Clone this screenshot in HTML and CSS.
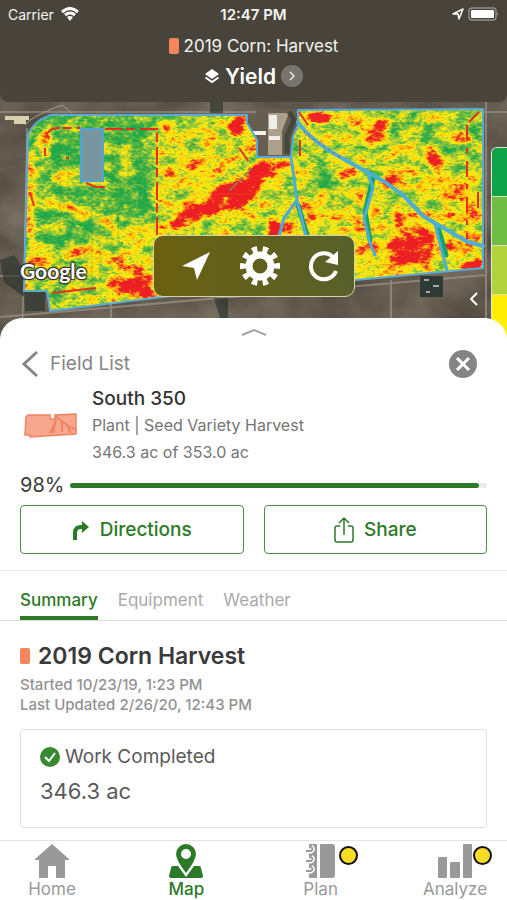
FILE: index.html
```html
<!DOCTYPE html>
<html lang="en">
<head>
  <meta charset="UTF-8">
  <meta name="viewport" content="width=device-width, initial-scale=1">
  <title>South 350 - Field Map</title>
  <link rel="stylesheet" href="styles.css">
</head>
<body>
  <!-- Map -->
  <section class="map">
    <svg class="map-picture" viewBox="0 0 507 342" preserveAspectRatio="xMidYMin slice" aria-hidden="true">
      <defs>
        <!-- grey level in, yield colour out: black is low (red), white is high (green) -->
        <filter id="yield" filterUnits="userSpaceOnUse" x="0" y="90" width="507" height="240" color-interpolation-filters="sRGB">
          <feGaussianBlur in="SourceGraphic" stdDeviation="3" result="base"/>
          <feTurbulence type="fractalNoise" baseFrequency="0.06 0.09" numOctaves="4" seed="7"/>
          <feColorMatrix values="1 0 0 0 0  1 0 0 0 0  1 0 0 0 0  0 0 0 0 1" result="patches"/>
          <feTurbulence type="fractalNoise" baseFrequency="0.25 0.45" numOctaves="2" seed="12"/>
          <feColorMatrix values="0 1 0 0 0  0 1 0 0 0  0 1 0 0 0  0 0 0 0 1" result="grain"/>
          <feComposite in="base" in2="patches" operator="arithmetic" k2="1" k3="1.1" k4="-0.56" result="mixed"/>
          <feComposite in="mixed" in2="grain" operator="arithmetic" k2="1" k3="0.55" k4="-0.28"/>
          <feComponentTransfer>
            <feFuncR type="table" tableValues="0.93 0.93 0.97 1 0.99 0.74 0.47 0.25 0.12"/>
            <feFuncG type="table" tableValues="0.12 0.14 0.52 0.83 0.93 0.83 0.75 0.69 0.66"/>
            <feFuncB type="table" tableValues="0.14 0.13 0.10 0.05 0.06 0.18 0.25 0.27 0.29"/>
          </feComponentTransfer>
        </filter>
        <filter id="soil" x="0" y="0" width="100%" height="100%" color-interpolation-filters="sRGB">
          <feTurbulence type="fractalNoise" baseFrequency="0.02 0.03" numOctaves="3" seed="3"/>
          <feColorMatrix values="0.22 0 0 0 0.28  0.21 0 0 0 0.25  0.20 0 0 0 0.21  0 0 0 0 1"/>
        </filter>
        <clipPath id="field">
          <path d="M28 135Q31 127 40 120L51 115H247V123L257 140V157H291L293 137 298 125V110L483 109V268L356 280 170 296 50 311 47 291H24L25 250Z"/>
        </clipPath>
      </defs>

      <!-- ground, roads and farm yards -->
      <rect width="507" height="342" filter="url(#soil)"/>
      <g fill="none" stroke="#a5a08f">
        <path d="M0 112H507" stroke-width="1"/>
        <path d="M27 128L24 270 22 342M25 125Q30 117 62 105L72 113"/>
        <path d="M486 100V342M0 317L486 275M0 276H24M111 303V342M391 280V342" stroke-width="2" opacity=".6"/>
      </g>
      <path d="M5 118h24M14 122h12" stroke="#d9d2ae" stroke-width="4"/>
      <path d="M210 102h13v11h-13ZM0 260l14-5 10 14v28l-20-15ZM24 291h21v20H25ZM214 298h14v20h-8Z" fill="#25312a" opacity=".6"/>
      <path d="M256 109h40v48h-40Z" fill="#675e50"/>
      <path d="M268 113h21l-7 18v24h-14Z" fill="#aba18a"/>
      <path d="M269 115h8v14h-8ZM253 131h13v4h-13ZM269 136h11v4h-11Z" fill="#f0efea"/>
      <path d="M289 112l5 8-7 16v18" fill="none" stroke="#3c4236" stroke-width="5" opacity=".8"/>
      <path d="M420 276h23v21h-23Z" fill="#2d3a35"/>
      <path d="M424 280h5M433 286h6M426 292h4" stroke="#a9aaa0" stroke-width="2"/>

      <!-- yield heat map -->
      <g clip-path="url(#field)">
        <g filter="url(#yield)">
          <rect y="80" width="507" height="260" fill="#a0a0a0"/>
          <path d="M20 110H157V235L100 240 40 260H20Z" fill="#c8c8c8"/>
          <path d="M104 120h40v110h-40ZM68 125h14v110h-14Z" fill="#dadada"/>
          <path d="M157 115H250L300 170V240H157Z" fill="#909090"/>
          <path d="M300 110H420L370 180 300 150Z" fill="#a0a0a0"/>
          <path d="M410 108h72v62h-50Z" fill="#c0c0c0"/>
          <path d="M300 170l100 30 80 50v35l-190 5Z" fill="#868686"/>
          <path d="M20 112h90l80 2v8H40Z" fill="#d8d8d8"/>
          <path d="M305 170l40 5 10 30-45 5ZM462 120h20v80h-20Z" fill="#b8b8b8"/>
          <g fill="none" stroke="#585858" stroke-width="9" stroke-linecap="round">
            <path d="M48 130q-6 12-2 22M30 155v75l5 30M60 175h16M50 200l50 18 18 16M35 262l40-10 32 5M125 150v14M160 120l10 14M185 155l-20 30M120 262l15-35 15 10"/>
            <path d="M185 165h35M240 120l8 30M345 118l22 12 10 28M405 150h22M375 185h50M440 190l10 25M310 245h60M325 195l-18 15M450 245h30M435 120l30 18"/>
          </g>
          <path d="M103 260l25-8 25 20v20l-45 8ZM190 180h65v30h-40ZM360 120h24v22h-24ZM432 175h45v65h-18Z" fill="#606060"/>
          <!-- low yield spots -->
          <g fill="#000">
            <path d="M168 228q8-20 34-24 13-5 15-16l32-12 8-15h28l2 8-22 7q-2 18-16 24l-20 12-35 8-16 9Z"/>
            <path d="M112 298l8-12 20-5-8-20 20 15v20ZM228 122l10-4 5 16-13 4Z"/>
            <path d="M308 114h22v9h-22ZM376 118h13l-4 16-8-4ZM420 148h16l6 32-8-10ZM387 238l27-3 8 24-32 10ZM414 225l20 8-3 32-12-6ZM461 262h22v12h-22ZM445 236l20 8-15 8ZM394 210l12 14-10 8ZM357 212l8 40h-6ZM315 220l8 8M340 168h16v8h-16ZM388 174h12v8h-12Z"/>
            <path d="M270 222h10v15h-10ZM285 220h10v15h-10Z"/>
          </g>
        </g>
        <!-- tractor lines -->
        <path d="M60 125V245M68 125V280M92 185V285M100 125V280M112 130V270M118 130V270M128 130V225M140 130V210" stroke="#3d8f35" opacity=".3"/>
        <path d="M160 133H247M160 145H290M160 158H290M160 176H290M160 194H290M300 190H480M300 205H480M340 219H480M330 250H480" stroke="#e77e1d" opacity=".22"/>
        <!-- headland passes -->
        <g fill="none" stroke="#e8301f" stroke-width="2">
          <path d="M46 137q2-9 12-9h22M105 129H157V250" stroke-dasharray="18 3 9 5"/>
          <path d="M86 183l10 4h9M30 192l4 14M45 148v8M66 158h3M52 293l44-5"/>
          <path d="M467 125V245M478 192v16M469 122l10-10M299 112l9 13M239 148l10 14M300 140v22" stroke-dasharray="16 7 5 8"/>
        </g>
        <path d="M311 115h18v7h-18Z" fill="#ee2524"/>
      </g>

      <!-- grass waterways -->
      <g fill="none" stroke-linecap="round" stroke-linejoin="round">
        <path d="M373 178L365 212 370 240M438 227L446 255M298 205L307 235" stroke="#17a16b" stroke-width="5"/>
        <g stroke="#4cadd6" stroke-width="3">
          <path d="M298 122Q310 140 340 157L385 182 403 195 423 216 440 226 468 242 483 246" stroke-width="4"/>
          <path d="M369 177L373 188 364 218 370 243 375 255M435 224L441 248 447 270M291 157L297 200 307 240M297 200L284 218 278 240"/>
        </g>
        <path d="M304 132L341 158" stroke="#c23a50" stroke-dasharray="1 5"/>
        <path d="M230 190L251 169" stroke="#738467" stroke-width="2" stroke-dasharray="3 4"/>
      </g>

      <!-- boundary -->
      <path d="M28 135Q31 127 40 120L51 115H247V123L257 140V157H291L293 137 298 125V110L483 109V268L356 280 170 296 50 311 47 291H24L25 250Z" fill="none" stroke="#5aabd9" stroke-width="2" stroke-linejoin="round"/>
      <path d="M81 129h22v52H81Z" fill="#7895a0" stroke="#4fa5d4" stroke-width="2"/>
    </svg>

    <header class="map-header">
      <div class="status-bar">
        <span class="carrier">Carrier
          <svg width="20" height="16" viewBox="0 0 20 16" fill="none" stroke="#fff" stroke-width="3" aria-hidden="true">
            <path d="M2 6Q10-1 18 6M5 9Q10 5 15 9"/>
            <path d="M7 11Q10 9 13 11L10 15Z" fill="#fff" stroke="none"/>
          </svg>
        </span>
        <time>12:47 PM</time>
        <span class="status-icons">
          <svg width="12" height="12" viewBox="0 0 12 12" fill="none" stroke="#fff" stroke-width="1.5" stroke-linejoin="round" aria-hidden="true">
            <path d="M1 6L11 1 7 11 6 6Z"/>
          </svg>
          <svg width="31" height="14" viewBox="0 0 31 14" aria-hidden="true">
            <rect x="1" y="1" width="27" height="12" rx="3" fill="none" stroke="#8f8e89" stroke-width="1.5"/>
            <rect x="3" y="3" width="23" height="8" rx="1" fill="#fff"/>
            <path d="M29 5q2 2 0 4Z" fill="#8f8e89"/>
          </svg>
        </span>
      </div>
      <p class="season"><span class="swatch"></span>2019 Corn: Harvest</p>
      <button class="layer-button" type="button">
        <svg width="16" height="16" viewBox="0 0 16 16" aria-hidden="true">
          <path d="M8 1L15 6 8 11 1 6Z" fill="#fff"/>
          <path d="M1.500 9.500L8 14 14.500 9.500" fill="none" stroke="#fff" stroke-width="2"/>
        </svg>
        Yield
        <svg width="22" height="22" viewBox="0 0 22 22" aria-hidden="true">
          <circle cx="11" cy="11" r="11" fill="#76746d"/>
          <path d="M9 7L13 11 9 15" fill="none" stroke="#e8e8e5" stroke-width="1.500"/>
        </svg>
      </button>
    </header>

    <span class="google">Google</span>

    <div class="map-tools">
      <button type="button" aria-label="My location">
        <svg width="40" height="40" viewBox="0 0 40 40"><path d="M6 20L34 6 21 34 18 22Z" fill="#fff"/></svg>
      </button>
      <button type="button" aria-label="Map settings">
        <svg width="40" height="40" viewBox="0 0 40 40" fill="none" stroke="#fff">
          <circle cx="20" cy="20" r="11" stroke-width="7"/>
          <circle cx="20" cy="20" r="17" stroke-width="6" pathLength="100" stroke-dasharray="5 5" stroke-dashoffset="-2.500" transform="rotate(-18 20 20)"/>
        </svg>
      </button>
      <button type="button" aria-label="Refresh">
        <svg width="40" height="40" viewBox="0 0 40 40">
          <path d="M29 11A13 13 0 1 0 32 25" fill="none" stroke="#fff" stroke-width="4"/>
          <path d="M34 5V19L21 16Z" fill="#fff"/>
        </svg>
      </button>
    </div>

    <button class="legend-toggle" type="button" aria-label="Show legend">
      <svg width="10" height="16" viewBox="0 0 10 16" fill="none" stroke="#fff" stroke-width="2"><path d="M8 2L2 8 8 14"/></svg>
    </button>
    <div class="legend">
      <span class="legend-high"></span>
      <span class="legend-good"></span>
      <span class="legend-fair"></span>
      <span class="legend-low"></span>
    </div>
  </section>

  <!-- Field details -->
  <main class="sheet">
    <button class="handle" type="button" aria-label="Expand">
      <svg width="26" height="8" viewBox="0 0 26 8" fill="none" stroke="#a3a3a3" stroke-width="2"><path d="M1 7L13 2 25 7"/></svg>
    </button>

    <div class="sheet-bar">
      <a class="back" href="#fields">
        <svg width="18" height="28" viewBox="0 0 18 28" fill="none" stroke="#858585" stroke-width="3"><path d="M17 2L4 14 17 26"/></svg>
        Field List
      </a>
      <button class="close" type="button" aria-label="Close">
        <svg width="28" height="28" viewBox="0 0 28 28">
          <circle cx="14" cy="14" r="14" fill="#858585"/>
          <path d="M8 8L20 20M20 8L8 20" stroke="#fff" stroke-width="3"/>
        </svg>
      </button>
    </div>

    <div class="field-info">
      <svg class="field-shape" width="54" height="26" viewBox="0 0 54 26" stroke="#ef8461" aria-hidden="true">
        <path d="M2 4Q3 2 5 2H26V6H31V2L52 1V21L6 24V22H1Z" fill="#f8a78f" stroke-width="1.500"/>
        <path d="M31 3L43 12 52 17M32 6L29 20M38 9L38 19M43 12L47 20M30 12L26 20" fill="none" stroke-width="2"/>
      </svg>
      <div>
        <h2>South 350</h2>
        <p>Plant | Seed Variety Harvest</p>
        <p>346.3 ac of 353.0 ac</p>
      </div>
    </div>

    <div class="coverage">
      <label for="coverage">98%</label>
      <progress id="coverage" value="98" max="100"></progress>
    </div>

    <div class="actions">
      <button type="button">
        <svg width="18" height="20" viewBox="0 0 18 20">
          <path d="M3 20V13Q3 7 9 7H11" fill="none" stroke="#2c7a27" stroke-width="4"/>
          <path d="M10 1L17 7 10 13Z" fill="#2c7a27"/>
        </svg>
        Directions
      </button>
      <button type="button">
        <svg width="20" height="26" viewBox="0 0 20 26" fill="none" stroke="#2c7a27" stroke-width="1.500" stroke-linejoin="round">
          <path d="M6 9H3Q1 9 1 11V23Q1 25 3 25H17Q19 25 19 23V11Q19 9 17 9H14M10 18V2M5 6L10 1 15 6"/>
        </svg>
        Share
      </button>
    </div>

    <nav class="tabs">
      <a class="active" href="#summary">Summary</a>
      <a href="#equipment">Equipment</a>
      <a href="#weather">Weather</a>
    </nav>

    <section class="summary" id="summary">
      <h1><span class="swatch"></span>2019 Corn Harvest</h1>
      <p class="meta">Started 10/23/19, 1:23 PM</p>
      <p class="meta">Last Updated 2/26/20, 12:43 PM</p>
      <div class="card">
        <h3>
          <svg width="20" height="20" viewBox="0 0 20 20" aria-hidden="true">
            <circle cx="10" cy="10" r="10" fill="#388a31"/>
            <path d="M5 10L9 14 15 6" fill="none" stroke="#fff" stroke-width="2"/>
          </svg>
          Work Completed
        </h3>
        <p>346.3 ac</p>
      </div>
    </section>
  </main>

  <!-- Bottom Navigation -->
  <nav class="bottom-nav">
    <a href="#home">
      <svg width="36" height="36" viewBox="0 0 36 36" fill="#999"><path d="M18 1L35 16V17H31V35H22V23H14V35H5V17H1V16Z"/></svg>
      Home
    </a>
    <a class="active" href="#map">
      <svg width="36" height="36" viewBox="0 0 36 36" fill="#2c7a27">
        <path d="M5 23H10L18 34 26 23H31Q33 23 33 25L35 33Q35 35 33 35H3Q1 35 1 33L3 25Q3 23 5 23Z"/>
        <path fill-rule="evenodd" d="M18 1A10 10 0 0 0 8 11Q8 17 18 30 28 17 28 11A10 10 0 0 0 18 1ZM18 6A5 5 0 1 1 18 16 5 5 0 0 1 18 6Z"/>
      </svg>
      Map
    </a>
    <a href="#plan">
      <svg width="36" height="36" viewBox="0 0 36 36" fill="#999">
        <path d="M6 1H14V35H6ZM17 1H29Q32 1 32 4V32Q32 35 29 35H17Z"/>
        <g fill="none">
          <path d="M3 8H8Q11 6 8 4M3 18H8Q11 16 8 14M3 28H8Q11 26 8 24" stroke="#fff" stroke-width="5"/>
          <path d="M3 8H8Q11 6 8 4M3 18H8Q11 16 8 14M3 28H8Q11 26 8 24" stroke="#999" stroke-width="2"/>
        </g>
      </svg>
      <span class="badge"></span>
      Plan
    </a>
    <a href="#analyze">
      <svg width="36" height="36" viewBox="0 0 36 36" fill="#999">
        <rect x="1" y="14" width="9" height="21" rx="1"/>
        <rect x="13" y="19" width="10" height="16" rx="1"/>
        <rect x="26" y="1" width="9" height="34" rx="1"/>
      </svg>
      <span class="badge"></span>
      Analyze
    </a>
  </nav>
</body>
</html>
```

FILE: styles.css
```css
* {
  box-sizing: border-box;
}

body {
  font-family: Inter, Roboto, sans-serif;
  margin: 0;
  min-height: 100vh;
  display: flex;
  flex-direction: column;
  background-color: #fff;
  color: #3a3a3a;
}

h1, h2, h3, p {
  margin: 0;
}

a {
  text-decoration: none;
}

button {
  font-family: inherit;
  background: none;
  border: none;
  padding: 0;
  cursor: pointer;
}

svg {
  display: block;
  flex: none;
}

.swatch {
  display: inline-block;
  width: 10px;
  height: 16px;
  border-radius: 2px;
  background-color: #f5855f;
}

/* Map */
.map {
  position: relative;
  height: 342px;
  overflow: hidden;
  background-color: #5e564a;
}

.map-picture {
  position: absolute;
  top: 0;
  left: 0;
  width: 100%;
  height: 100%;
}

.map-header {
  position: relative;
  height: 102px;
  border-radius: 0 0 8px 8px;
  background-color: #48443b;
  color: #f4f4f2;
  display: flex;
  flex-direction: column;
  align-items: center;
}

.status-bar {
  align-self: stretch;
  height: 28px;
  padding: 0 8px;
  display: grid;
  grid-template-columns: 1fr auto 1fr;
  align-items: center;
  font-size: 14px;
}

.status-bar time {
  font-size: 15px;
  font-weight: 600;
}

.carrier {
  display: flex;
  align-items: center;
  gap: 6px;
}

.status-icons {
  display: flex;
  align-items: center;
  justify-content: flex-end;
  gap: 4px;
}

.season {
  height: 36px;
  display: flex;
  align-items: center;
  gap: 5px;
  font-size: 17px;
}

.layer-button {
  height: 24px;
  display: flex;
  align-items: center;
  gap: 5px;
  color: #fff;
  font-size: 21px;
  font-weight: 600;
}

.google {
  position: absolute;
  left: 20px;
  top: 258px;
  color: #fff;
  font-family: Lato, sans-serif;
  font-size: 21px;
  font-weight: 700;
  line-height: 26px;
  text-shadow: 1px 1px 1px #333, -1px -1px 1px #333, 1px -1px 1px #333, -1px 1px 1px #333;
}

.map-tools {
  position: absolute;
  left: 50%;
  top: 235px;
  transform: translateX(-50%);
  height: 62px;
  padding: 0 10px 0 22px;
  display: flex;
  align-items: center;
  gap: 24px;
  border: 1px solid #d5d4a8;
  border-radius: 10px;
  background-image: linear-gradient(90deg, #6b6010, #57602a);
}

.legend {
  position: absolute;
  right: 0;
  top: 147px;
  width: 16px;
  border: 1px solid #e4e8d8;
  border-right: none;
  border-radius: 6px 0 0 0;
  overflow: hidden;
}

.legend span {
  display: block;
  height: 49px;
  border-bottom: 1px solid #d8e0b0;
}

.legend-high {
  background-color: #0fa44a;
}

.legend-good {
  background-color: #70bd46;
}

.legend-fair {
  background-color: #b2d33b;
}

.legend-low {
  background-color: #fdee04;
}

.legend-toggle {
  position: absolute;
  right: 28px;
  top: 291px;
}

/* Sheet */
.sheet {
  position: relative;
  flex: 1;
  margin-top: -24px;
  border-radius: 22px 22px 0 0;
  background-color: #fff;
}

.handle {
  display: block;
  margin: 0 auto;
  padding: 10px 0 6px;
}

.sheet-bar {
  height: 43px;
  padding: 0 30px 0 20px;
  display: flex;
  justify-content: space-between;
  align-items: center;
}

.back {
  display: flex;
  align-items: center;
  gap: 12px;
  color: #858585;
  font-size: 19px;
}

.field-info {
  padding: 0 20px 0 24px;
  display: flex;
  align-items: center;
  gap: 14px;
  line-height: 27px;
}

.field-info h2 {
  font-size: 19px;
  font-weight: 500;
  color: #333;
}

.field-info p {
  font-size: 16px;
  color: #757575;
}

.coverage {
  margin: 7px 20px 8px;
  display: flex;
  align-items: center;
  gap: 6px;
  font-size: 20px;
  line-height: 24px;
}

.coverage progress {
  flex: 1;
  min-width: 0;
  height: 5px;
  border: none;
  appearance: none;
  border-radius: 3px;
  background-color: #ececec;
}

.coverage progress::-webkit-progress-bar {
  border-radius: 3px;
  background-color: #ececec;
}

.coverage progress::-webkit-progress-value {
  border-radius: 3px;
  background-color: #2c7a27;
}

.actions {
  padding: 0 20px 16px;
  display: grid;
  grid-template-columns: 1fr 1fr;
  gap: 20px;
  border-bottom: 1px solid #e8e8e8;
}

.actions button {
  height: 49px;
  display: flex;
  justify-content: center;
  align-items: center;
  gap: 10px;
  border: 1px solid #4c8f48;
  border-radius: 4px;
  color: #2c7a27;
  font-size: 19px;
  font-weight: 500;
}

.tabs {
  padding: 15px 20px 0;
  display: flex;
  gap: 20px;
  border-bottom: 1px solid #dedede;
}

.tabs a {
  height: 34px;
  line-height: 28px;
  color: #aaa;
  font-size: 17px;
  font-weight: 400;
}

.tabs a.active {
  color: #2c7a27;
  font-weight: 500;
  border-bottom: 4px solid #2c7a27;
}

/* Summary */
.summary {
  padding: 18px 20px 12px;
}

.summary h1 {
  display: flex;
  align-items: center;
  gap: 8px;
  font-size: 23px;
  font-weight: 600;
  line-height: 34px;
  margin-bottom: 2px;
}

.meta {
  color: #929292;
  font-size: 15px;
  font-weight: 500;
  line-height: 20px;
}

.card {
  margin-top: 14px;
  height: 99px;
  padding: 10px 19px;
  border: 1px solid #dfdfdf;
  border-radius: 4px;
  color: #5a5a5a;
  line-height: 34px;
}

.card h3 {
  display: flex;
  align-items: center;
  gap: 5px;
  font-size: 19px;
  font-weight: 400;
}

.card p {
  font-size: 22px;
}

/* Bottom Navigation */
.bottom-nav {
  padding: 2px 0;
  display: flex;
  justify-content: space-between;
  border-top: 1px solid #e4e4e4;
}

.bottom-nav a {
  position: relative;
  width: 104px;
  height: 57px;
  display: flex;
  flex-direction: column;
  align-items: center;
  color: #999;
  font-size: 17px;
}

.bottom-nav a.active {
  color: #2c7a27;
  font-weight: 500;
}

.badge {
  position: absolute;
  left: 70px;
  top: 3px;
  width: 19px;
  height: 19px;
  border: 2px solid #111;
  border-radius: 50%;
  background-color: #f9dc24;
}
```
